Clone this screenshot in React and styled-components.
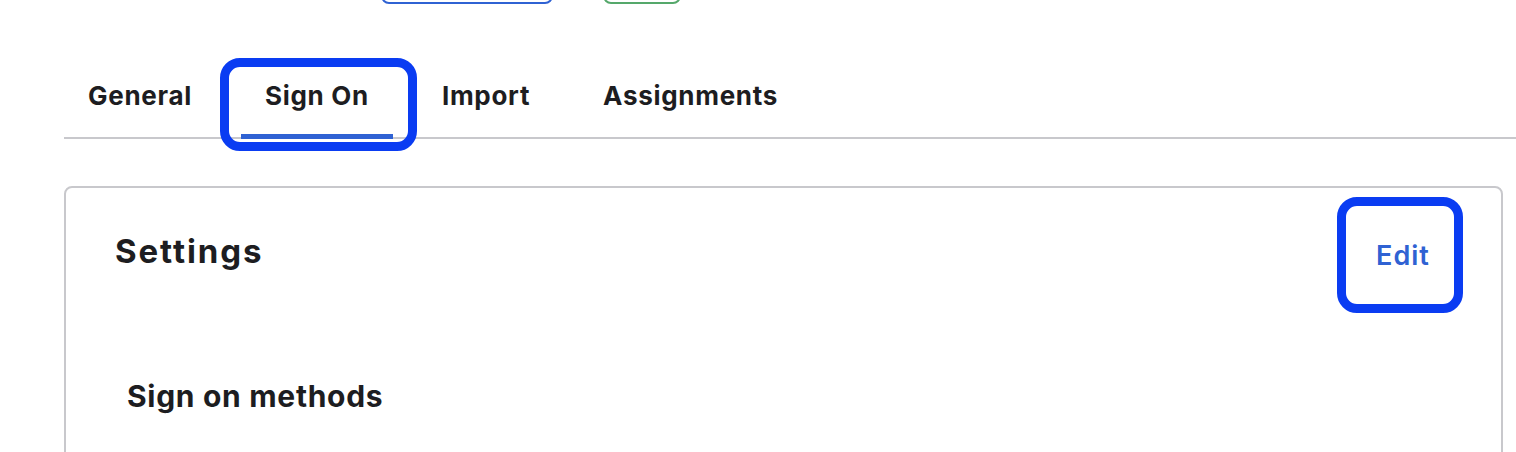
import React from 'react';
import styled, { createGlobalStyle } from 'styled-components';

const GlobalStyle = createGlobalStyle`
  body {
    margin: 0;
    background: #ffffff;
    font-family: Inter, "Noto Sans", "Liberation Sans", sans-serif;
    color: #1d1d21;
  }
`;

const TopBar = styled.div`
  display: flex;
  gap: 50px;
  padding-left: 381px;
  margin-top: -32px;
`;

const PillButton = styled.div`
  width: ${props => props.$width}px;
  height: 36px;
  box-sizing: border-box;
  border: 2px solid ${props => props.$color};
  border-radius: 8px;
`;

const TabList = styled.nav`
  display: flex;
  gap: 25px;
  margin: 76px 0 0 64px;
  border-bottom: 2px solid #c8c8cc;
`;

const Tab = styled.div`
  position: relative;
  padding: 0 24px 25px;
  font-size: 26px;
  line-height: 32px;
  font-weight: 700;
  letter-spacing: 0.7px;
  color: #1d1d21;

  ${props => props.$active && `
    &::after {
      content: "";
      position: absolute;
      left: 0;
      right: 0;
      bottom: -2px;
      height: 5px;
      background: #2f62d3;
    }
  `}
`;

const FocusRing = styled.span`
  position: absolute;
  top: ${props => props.$top}px;
  left: ${props => props.$left}px;
  right: ${props => props.$right}px;
  bottom: ${props => props.$bottom}px;
  border: 9px solid #0a3cf2;
  border-radius: 20px;
  pointer-events: none;
`;

const Card = styled.section`
  margin: 47px 13px 0 64px;
  border: 2px solid #c8c8cc;
  border-radius: 8px;
  padding-bottom: 120px;
`;

const CardHeader = styled.div`
  display: flex;
  justify-content: space-between;
  align-items: center;
  padding: 18px 47px 0 49px;
`;

const Title = styled.h2`
  margin: 0 0 8px;
  font-size: 33px;
  line-height: 40px;
  font-weight: 700;
  letter-spacing: 1.9px;
`;

const EditButton = styled.button`
  position: relative;
  width: 108px;
  height: 98px;
  padding: 0 0 0 6px;
  border: none;
  background: transparent;
  font-family: inherit;
  font-size: 27px;
  font-weight: 600;
  letter-spacing: 1px;
  color: #2f62d3;
  cursor: pointer;
`;

const SectionTitle = styled.h3`
  margin: 74px 0 0 61px;
  font-size: 30px;
  line-height: 36px;
  font-weight: 700;
  letter-spacing: 0.7px;
`;

const tabs = ['General', 'Sign On', 'Import', 'Assignments'];

function App() {
  return (
    <>
      <GlobalStyle />
      <TopBar>
        <PillButton $width={172} $color="#2f62d3" />
        <PillButton $width={78} $color="#55a86b" />
      </TopBar>
      <TabList>
        {tabs.map(name => (
          <Tab key={name} $active={name === 'Sign On'}>
            {name}
            {name === 'Sign On' && (
              <FocusRing $top={-22} $left={-21} $right={-24} $bottom={-14} />
            )}
          </Tab>
        ))}
      </TabList>
      <Card>
        <CardHeader>
          <Title>Settings</Title>
          <EditButton>
            Edit
            <FocusRing $top={-9} $left={-9} $right={-9} $bottom={-9} />
          </EditButton>
        </CardHeader>
        <SectionTitle>Sign on methods</SectionTitle>
      </Card>
    </>
  );
}

export default App;
